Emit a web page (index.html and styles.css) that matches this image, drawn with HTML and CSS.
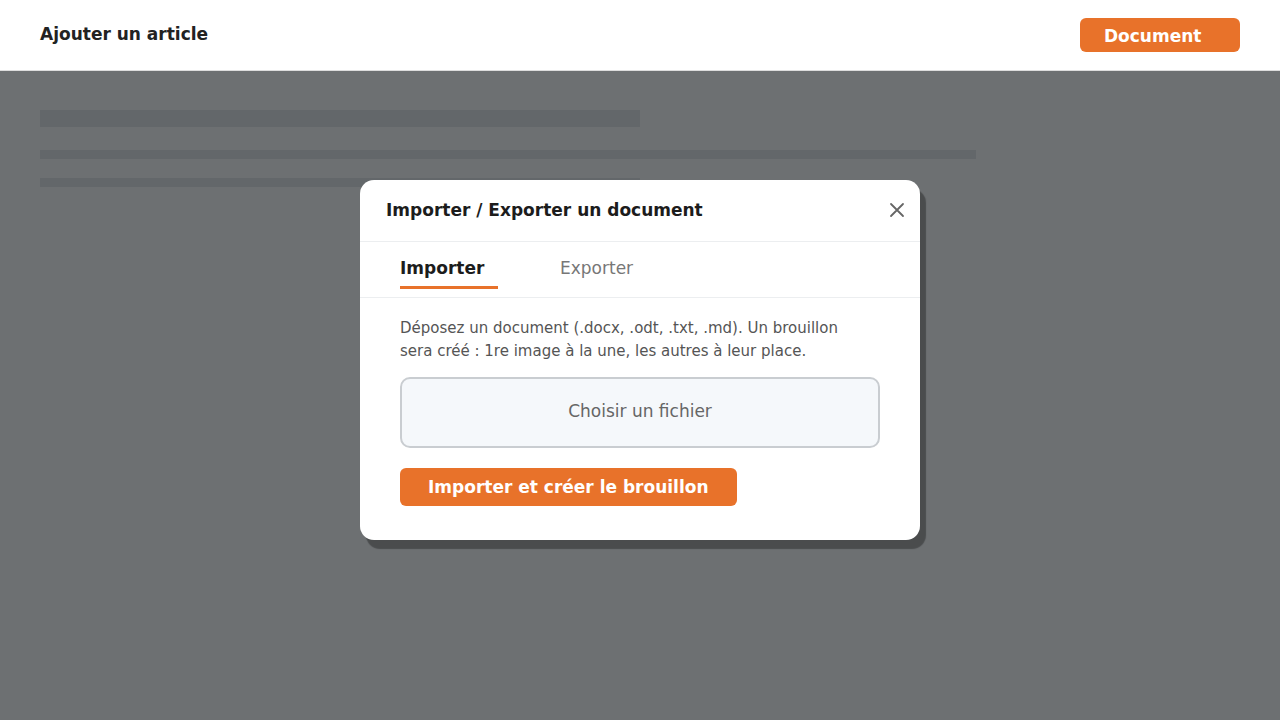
FILE: index.html
```html
<!DOCTYPE html>
<html lang="fr">
<head>
  <meta charset="UTF-8" />
  <meta name="viewport" content="width=device-width, initial-scale=1.0"/>
  <title>Ajouter un article</title>
  <link rel="stylesheet" href="styles.css">
</head>
<body>
  <header class="topbar">
    <h1>Ajouter un article</h1>
    <button class="btn btn-doc">Document</button>
  </header>

  <main class="page">
    <div class="skeleton sk-title"></div>
    <div class="skeleton sk-line"></div>
    <div class="skeleton sk-line sk-short"></div>

    <div class="overlay">
      <div class="modal">
        <div class="modal-head">
          <h2>Importer / Exporter un document</h2>
          <button class="close" aria-label="Fermer">
            <svg width="16" height="16" viewBox="0 0 16 16"><path d="M2 2L14 14M14 2L2 14" stroke="#666" stroke-width="1.8" fill="none" stroke-linecap="round"/></svg>
          </button>
        </div>
        <div class="tabs">
          <div class="tab active">Importer</div>
          <div class="tab">Exporter</div>
        </div>
        <div class="modal-body">
          <p>Déposez un document (.docx, .odt, .txt, .md). Un brouillon<br>sera créé : 1re image à la une, les autres à leur place.</p>
          <label class="dropzone">Choisir un fichier</label>
          <button class="btn btn-import">Importer et créer le brouillon</button>
        </div>
      </div>
    </div>
  </main>
</body>
</html>
```

FILE: styles.css
```css
* {
  box-sizing: border-box;
}
body {
  margin: 0;
  font-family: "DejaVu Sans", sans-serif;
  background: #fff;
  color: #222;
}
.topbar {
  height: 71px;
  display: flex;
  align-items: center;
  justify-content: space-between;
  padding: 0 40px;
  background: #fff;
  border-bottom: 1px solid #ddd;
}
.topbar h1 {
  font-size: 17px;
  font-weight: bold;
  margin: 0 0 2px;
  color: #222;
}
.btn {
  font-family: inherit;
  font-weight: bold;
  font-size: 17px;
  color: #fff;
  background: #e8722a;
  border: none;
  border-radius: 6px;
  cursor: pointer;
}
.btn-doc {
  width: 160px;
  height: 34px;
  margin-bottom: 1px;
  padding: 3px 24px 0;
  text-align: left;
}
.page {
  position: relative;
  height: 649px;
  padding: 39px 40px 0;
  background: #fff;
}
.skeleton {
  background: #e6e8eb;
}
.sk-title {
  width: 600px;
  height: 17px;
  margin-bottom: 23px;
}
.sk-line {
  width: 936px;
  height: 9px;
  margin-bottom: 19px;
}
.sk-short {
  width: 600px;
}
.overlay {
  position: absolute;
  inset: 0;
  background: rgba(16, 21, 24, 0.61);
  display: flex;
  justify-content: center;
  align-items: flex-start;
  padding-top: 109px;
}
.modal {
  width: 560px;
  background: #fff;
  border-radius: 14px;
  box-shadow: 6px 9px 1px rgba(0, 0, 0, 0.32);
  overflow: hidden;
}
.modal-head {
  height: 62px;
  display: flex;
  align-items: center;
  justify-content: space-between;
  padding: 0 11px 2px 26px;
  border-bottom: 1px solid #eceef0;
}
.modal-head h2 {
  margin: 0;
  font-size: 17px;
  font-weight: bold;
  color: #1c1c1c;
}
.close {
  background: none;
  border: none;
  padding: 4px;
  display: flex;
  cursor: pointer;
}
.tabs {
  display: flex;
  gap: 62px;
  padding: 0 40px;
  height: 56px;
  border-bottom: 1px solid #eceef0;
}
.tab {
  font-size: 17px;
  color: #777;
  padding-top: 16px;
  height: 47px;
}
.tab.active {
  color: #1c1c1c;
  font-weight: bold;
  border-bottom: 3px solid #e8722a;
  width: 98px;
}
.modal-body {
  padding: 19px 40px 34px;
}
.modal-body p {
  margin: 0 0 14px;
  font-size: 15px;
  line-height: 23px;
  color: #555;
}
.dropzone {
  display: flex;
  align-items: center;
  justify-content: center;
  height: 71px;
  padding-bottom: 4px;
  background: #f5f8fb;
  border: 2px solid #c9cdd1;
  border-radius: 10px;
  font-size: 17px;
  color: #666;
  cursor: pointer;
}
.btn-import {
  margin-top: 20px;
  height: 38px;
  padding: 0 28px;
}
```
